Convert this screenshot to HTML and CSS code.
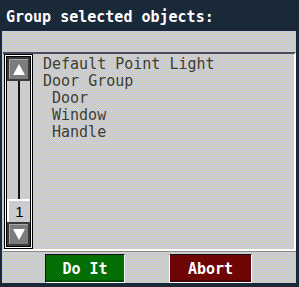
FILE: index.html
```html
<!DOCTYPE html>
<html lang="en">
<head>
<meta charset="UTF-8">
<title>Group selected objects</title>
<link rel="stylesheet" href="styles.css">
</head>
<body>
<div class="window">
    <div class="title">Group selected objects:</div>

    <div class="panel">
        <div class="listbox">
            <!-- scrollbar -->
            <div class="scroll">
                <div class="sbtn"><span class="tri up"></span></div>
                <div class="track"></div>
                <div class="pos">1</div>
                <div class="sbtn"><span class="tri down"></span></div>
            </div>

            <ul class="items">
                <li>Default Point Light</li>
                <li>Door Group</li>
                <li class="sub">Door</li>
                <li class="sub">Window</li>
                <li class="sub">Handle</li>
            </ul>
        </div>

        <div class="buttons">
            <button class="btn ok">Do It</button>
            <button class="btn cancel">Abort</button>
        </div>
    </div>
</div>
</body>
</html>
```
FILE: styles.css
```css
body { margin: 0; background: #1b2a3b; font-family: "DejaVu Sans Mono", monospace; }
.window { width: 299px; height: 287px; overflow: hidden;
          background: repeating-conic-gradient(#1e3043 0 25%, #16212e 0 50%) 0 0 / 2px 2px; }

.title { height: 31px; box-sizing: border-box; padding: 9px 0 0 6px;
         color: #fff; font-weight: bold; font-size: 15px; line-height: 17px; }

.panel {
    margin: 0 3px 0 2px; height: 252px; box-sizing: border-box; padding-top: 21px;
    background: repeating-conic-gradient(#d6d6c8 0 25%, #c2c4d4 0 50%) 0 0 / 2px 2px;
}

.listbox {
    display: flex; height: 199px; box-sizing: border-box; margin-left: 1px;
    border-top: 2px solid #4c4c5c; border-right: 2px solid #fff; border-bottom: 2px solid #fff;
    box-shadow: 0 1px 0 #8a8a8a;
}

.scroll {
    display: flex; flex-direction: column; width: 29px; box-sizing: border-box;
    margin: 0 0 0 1px; padding: 2px;
    border: 1px solid #000; box-shadow: inset 0 0 0 1px #fff, inset 0 0 0 2px #000;
}
.sbtn {
    height: 24px; display: flex; align-items: center; justify-content: center;
    background: #7c7c7c; border: 2px solid #3a3a3a; box-shadow: inset 1px 1px 0 #a8a8a8;
    box-sizing: border-box;
}
.tri { width: 0; height: 0; border-left: 6px solid transparent; border-right: 6px solid transparent; }
.tri.up { border-bottom: 11px solid #fff; }
.tri.down { border-top: 11px solid #fff; }
.track { flex: 1; margin: 0 auto; width: 2px; background: #111; }
.pos {
    height: 23px; box-sizing: border-box; text-align: center;
    border-top: 2px solid #fff; border-left: 2px solid #fff;
    font-family: "Liberation Sans", sans-serif; font-size: 15px; line-height: 22px; color: #000;
}

.items { list-style: none; margin: 0; padding: 2px 0 0 10px;
         font-size: 15px; line-height: 17px; color: #3e3e32; }
.items .sub { padding-left: 9px; }

.buttons { display: flex; gap: 44px; padding: 3px 0 0 43px; }
.btn {
    width: 80px; height: 29px; font-family: "DejaVu Sans Mono", monospace;
    font-weight: bold; font-size: 15px; color: #fff; padding: 0;
    border: 1px solid #111; border-right: 1px solid #fff; border-bottom: 1px solid #fff;
    box-shadow: inset 0 -2px 0 rgba(0,0,0,.35);
}
.btn.ok { background: repeating-conic-gradient(#087808 0 25%, #006400 0 50%) 0 0 / 2px 2px; }
.btn.cancel { width: 83px; border-left-color: #fff;
              background: repeating-conic-gradient(#780a0a 0 25%, #640000 0 50%) 0 0 / 2px 2px; }
```
